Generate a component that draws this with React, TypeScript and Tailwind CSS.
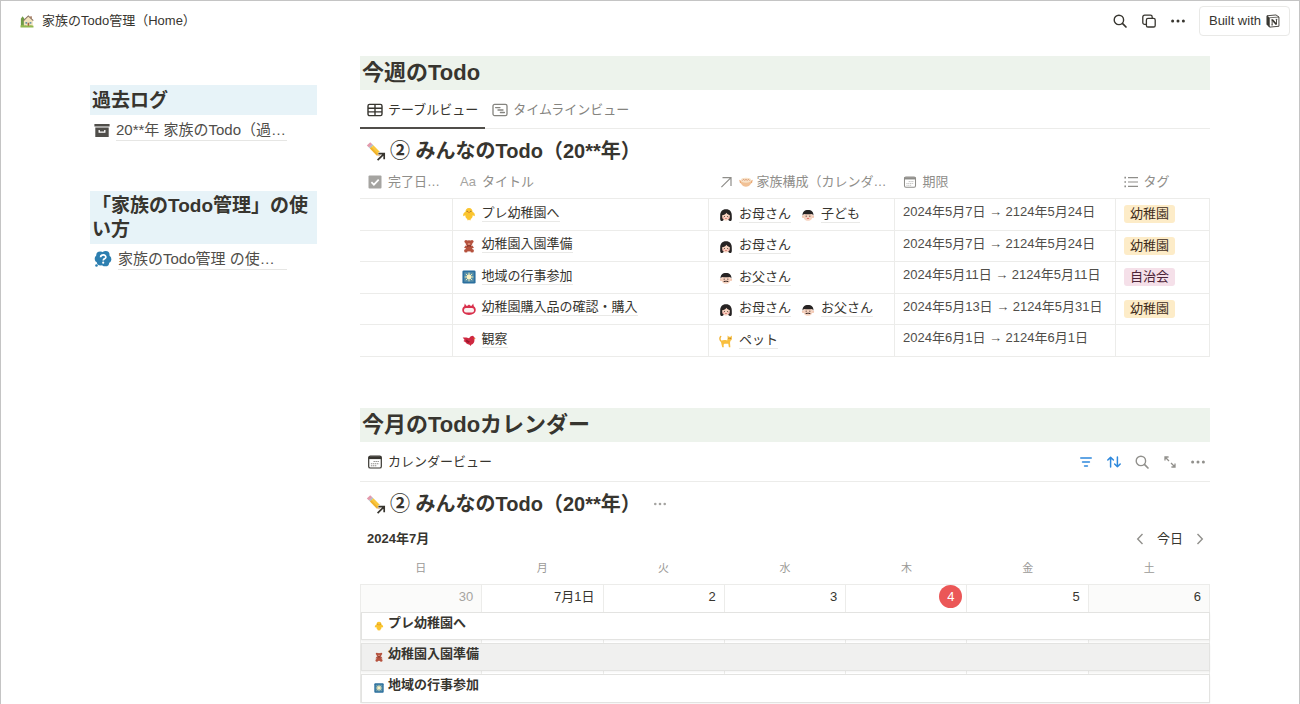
import type { ReactNode } from "react";

type IconProps = { className?: string };

/* ---------- line icons ---------- */

function SearchIcon({ className = "size-4" }: IconProps) {
  return (
    <svg viewBox="0 0 16 16" className={className} fill="none" stroke="currentColor" strokeWidth="1.4" strokeLinecap="round">
      <circle cx="6.9" cy="6.9" r="4.7" />
      <path d="M10.4 10.4 14 14" strokeWidth="1.7" />
    </svg>
  );
}

function CopyIcon({ className = "size-4" }: IconProps) {
  return (
    <svg viewBox="0 0 16 16" className={className} fill="none" stroke="currentColor" strokeWidth="1.3" strokeLinejoin="round">
      <rect x="5.4" y="5.4" width="8.8" height="8.6" rx="1.6" />
      <path d="M5.400 11.400H3.600A1.800 1.800 0 0 1 1.800 9.600V4A1.800 1.800 0 0 1 3.600 2.200h5.800A1.800 1.800 0 0 1 11.200 4v1.400" />
    </svg>
  );
}

function DotsIcon({ className = "size-4" }: IconProps) {
  return (
    <svg viewBox="0 0 16 16" className={className} fill="currentColor">
      <circle cx="2.6" cy="8" r="1.5" />
      <circle cx="8" cy="8" r="1.5" />
      <circle cx="13.4" cy="8" r="1.5" />
    </svg>
  );
}

function NotionIcon({ className = "size-[14px]" }: IconProps) {
  return (
    <svg viewBox="0 0 16 16" className={className} fill="none" stroke="#37352f">
      <path d="M1.2 2 11.4 1.1 14.8 3.4V14L4.2 15 1.2 11.8Z" fill="#fff" strokeWidth="1" strokeLinejoin="round" />
      <path d="M1.2 2 4 4.4V15L1.2 11.8Z" fill="#37352f" strokeWidth=".5" />
      <path d="M4 4.3 14.8 3.5" strokeWidth=".8" />
      <path d="M7 6.6v5.8M12 6v5.8" strokeWidth="1" />
      <path d="M7.2 6.6 11.900 12" strokeWidth="2" />
      <path d="M6 6.5h2M6 12.500h2M11 6.100h2" strokeWidth=".8" />
    </svg>
  );
}

function TableIcon({ className = "size-4" }: IconProps) {
  return (
    <svg viewBox="0 0 16 16" className={className} fill="none" stroke="currentColor" strokeWidth="1.4">
      <rect x="1" y="2.4" width="14" height="11.2" rx="1.6" />
      <path d="M1 6.2h14M1 9.9h14M8 2.4v11.2" />
    </svg>
  );
}

function TimelineIcon({ className = "size-4" }: IconProps) {
  return (
    <svg viewBox="0 0 16 16" className={className} fill="none" stroke="currentColor" strokeWidth="1.3" strokeLinecap="round">
      <rect x="1" y="2.4" width="14" height="11.2" rx="1.6" />
      <path d="M3.6 5.6H8M6 8h5M8.4 10.5h4" />
    </svg>
  );
}

function CalendarIcon({ className = "size-4" }: IconProps) {
  return (
    <svg viewBox="0 0 16 16" className={className} fill="none" stroke="currentColor">
      <rect x="1.7" y="2.2" width="12.6" height="11.8" rx="1.6" strokeWidth="1.2" />
      <path d="M1.7 3.8h12.6" strokeWidth="2.6" />
      <path d="M6.5 7.500h5.600M3.9 9.700h8.200M3.900 11.800h5.500" strokeWidth="1.1" strokeDasharray="1.4 .6" opacity=".55" />
    </svg>
  );
}

function CheckboxIcon({ className = "size-[14px]" }: IconProps) {
  return (
    <svg viewBox="0 0 14 14" className={className}>
      <rect x=".5" y=".5" width="13" height="13" rx="1" fill="currentColor" />
      <path d="m3.4 7.2 2.5 2.5 4.8-5" fill="none" stroke="#fff" strokeWidth="1.7" />
    </svg>
  );
}

function RelationIcon({ className = "size-[14px]" }: IconProps) {
  return (
    <svg viewBox="0 0 14 14" className={className} fill="none" stroke="currentColor" strokeWidth="1.2">
      <path d="M3.500 2.600h8.500v8.500M12 2.600 2.400 12.200" />
    </svg>
  );
}

function ListIcon({ className = "size-[14px]" }: IconProps) {
  return (
    <svg viewBox="0 0 14 14" className={className} fill="none" stroke="currentColor" strokeWidth="1.1">
      <path d="M4 2.6h10M4 7h10M4 11.4h10" />
      <path d="M.4 2.6h1.600M.4 7h1.600M.4 11.4h1.600" strokeWidth="1.6" />
    </svg>
  );
}

function FilterIcon({ className = "size-4" }: IconProps) {
  return (
    <svg viewBox="0 0 16 16" className={className} fill="none" stroke="currentColor" strokeWidth="1.6" strokeLinecap="round">
      <path d="M2.8 4h10.4M4.6 8h6.8M6.6 12h2.8" />
    </svg>
  );
}

function SortIcon({ className = "size-4" }: IconProps) {
  return (
    <svg viewBox="0 0 16 16" className={className} fill="none" stroke="currentColor" strokeWidth="1.5" strokeLinecap="round" strokeLinejoin="round">
      <path d="M4.6 13V3.2M1.8 6l2.8-2.8L7.4 6M11.4 3v9.8M8.6 10l2.8 2.8 2.8-2.8" />
    </svg>
  );
}

function ExpandIcon({ className = "size-4" }: IconProps) {
  return (
    <svg viewBox="0 0 16 16" className={className} fill="none" stroke="currentColor" strokeWidth="1.3">
      <path d="M3 6.6V3h3.6M3 3l4 4M13 9.4V13H9.4M13 13 9 9" />
    </svg>
  );
}

function ChevronIcon({ right }: { right?: boolean }) {
  return (
    <svg viewBox="0 0 14 14" className="size-[14px]" fill="none" stroke="currentColor" strokeWidth="1.4">
      <path d={right ? "m4.5 2 4.8 5-4.8 5" : "M9.5 2 4.7 7l4.8 5"} />
    </svg>
  );
}

function ArchiveIcon() {
  return (
    <svg viewBox="0 0 16 16" className="size-4 shrink-0" fill="#504e4a">
      <path d="M.4 2h15.2v2.6H.4zM1.3 5.600h13.400v9.400H1.300z" />
      <path d="M5.200 8v2.200h5.600V8" fill="none" stroke="#fff" strokeWidth="1.3" />
    </svg>
  );
}

function HelpIcon() {
  return (
    <svg viewBox="0 0 18 18" className="size-[18px] shrink-0">
      <g fill="#2d7fb0">
        <circle cx="6.200" cy="5.400" r="4" />
        <circle cx="11.700" cy="5" r="3.900" />
        <circle cx="13.600" cy="9.200" r="3.700" />
        <circle cx="11.300" cy="12.400" r="3.900" />
        <circle cx="6.600" cy="11.600" r="3.900" />
        <circle cx="4.200" cy="8.800" r="3.500" />
        <circle cx="2.500" cy="15.500" r="1.300" />
      </g>
      <path d="M6.600 7.200c.2-3.300 5.600-3 5.200.1-.2 1.600-2.600 1.500-2.600 3.300" fill="none" stroke="#fff" strokeWidth="1.7" />
      <circle cx="9.200" cy="12.700" r="1.100" fill="#fff" />
    </svg>
  );
}

/* ---------- emoji ---------- */

function HomeEmoji() {
  return (
    <svg viewBox="0 0 16 16" className="size-[14px]">
      <path d="M1 14.5V5.5L3 2.5l2 3v9Z" fill="#6f9b45" />
      <path d="M4.4 14V7L9.5 2.4 14.6 7v7Z" fill="#f3e3bd" />
      <path d="M3.8 7.8 9.5 2.2l5.7 5.4" fill="none" stroke="#8a7463" strokeWidth="1.3" />
      <path d="M11.8 2.5h1.6v3l-1.6-1.4Z" fill="#9c6a4d" />
      <path d="M6.2 9h2v2h-2zM11 9h2v2h-2z" fill="#6e97a8" />
      <path d="M8.7 10h1.8v4H8.7z" fill="#a4683f" />
      <path d="M.6 13c2-1.4 3.4-.6 4.4 0 2-.9 3.4.9 5 .3 2-.9 4-.6 5.4.2v1.8H.6Z" fill="#91b84e" />
    </svg>
  );
}

function PencilLinkEmoji() {
  return (
    <svg viewBox="0 0 20 20" className="size-5 shrink-0">
      <path d="M.8 4.400 4.200 1.200 6.400 3.200 3 6.600Z" fill="#e39aac" />
      <path d="M3 6.600 6.400 3.200 7.400 4.200 4 7.600Z" fill="#a9bac4" />
      <path d="M4 7.600 7.400 4.200 14.200 11.200 10.800 14.400Z" fill="#fac83d" />
      <path d="m4 7.600 1.400-1.300 7.100 7.100-1.700 1Z" fill="#f0b12d" />
      <path d="m10.800 14.400 3.400-3.200 1.600 5Z" fill="#e7c39a" />
      <path d="M12.400 12.600h5.800v5.600M18 12.800l-6.400 6.400" fill="none" stroke="#fff" strokeWidth="3" />
      <path d="M12.400 12.600h5.800v5.600M18 12.800l-6.400 6.400" fill="none" stroke="#37352f" strokeWidth="1.7" />
    </svg>
  );
}

function ChickEmoji({ className = "size-[14px]" }: IconProps) {
  return (
    <svg viewBox="0 0 16 16" className={className}>
      <path d="M8 1.200c2.800 0 4 2 4 4.300 2 .9 3.200 3 2.500 5l-2.300-1c0 2.300-1 4-2.400 4.300l.2 1.200H8.700L8 14.200 7.300 15H6l.2-1.200C4.800 13.500 3.800 11.800 3.800 9.500l-2.300 1c-.7-2 .5-4.100 2.500-5 0-2.300 1.200-4.300 4-4.300Z" fill="#fbc52e" />
      <path d="m6.700 5.900 1.300-.7 1.300.7L8 7.100Z" fill="#e8832e" />
      <circle cx="5.9" cy="4.9" r=".6" fill="#5d4326" />
      <circle cx="10.1" cy="4.9" r=".6" fill="#5d4326" />
    </svg>
  );
}

function BearEmoji({ className = "size-[14px]" }: IconProps) {
  return (
    <svg viewBox="0 0 16 16" className={className} fill="#b5523e">
      <circle cx="4.6" cy="2.8" r="1.8" />
      <circle cx="11.4" cy="2.8" r="1.8" />
      <ellipse cx="8" cy="4.6" rx="4" ry="3.2" />
      <ellipse cx="8" cy="10.2" rx="3.6" ry="4" />
      <path d="M4.5 7 2.400 9.800l1.500 1 2-2ZM11.500 7l2.100 2.800-1.500 1-2-2Z" />
      <circle cx="4.5" cy="13.4" r="2.1" />
      <circle cx="11.5" cy="13.4" r="2.1" />
      <ellipse cx="8" cy="5.700" rx="1.600" ry="1.200" fill="#d98b74" />
      <path d="M5.400 7.300h5.200L9.800 8.800 8 8l-1.800.8Z" fill="#6e2a22" />
    </svg>
  );
}

function EventEmoji({ className = "size-[14px]" }: IconProps) {
  return (
    <svg viewBox="0 0 16 16" className={className}>
      <rect x=".5" y=".5" width="15" height="15" rx="1.6" fill="#2b6f9e" />
      <rect x="2.6" y="2.6" width="10.8" height="10.8" fill="#5a91ab" />
      <path d="M8 3v10M3 8h10M4.5 4.5l7 7M11.5 4.5l-7 7" stroke="#f4ebae" strokeWidth="1.1" />
      <circle cx="8" cy="7.8" r="2.7" fill="#fbf2c1" />
    </svg>
  );
}

function BadgeEmoji() {
  return (
    <svg viewBox="0 0 16 16" className="size-[14px]">
      <path d="m3.200 1.600 1.700 2.600h1.300L8 2.800l1.800 1.400h1.300l1.700-2.600.7 3.300c1.400.9 2.200 2.300 2.200 4 0 3.600-3.300 5.900-7.700 5.900S.3 12.500.3 8.900c0-1.700.8-3.100 2.200-4Z" fill="#d9304c" />
      <rect x="2.300" y="6.800" width="11.400" height="5.200" rx="2.200" fill="#f9f2f1" />
    </svg>
  );
}

function BirdEmoji() {
  return (
    <svg viewBox="0 0 16 16" className="size-[14px]">
      <path d="M.8 5.200 5 5 8 6l2-2.200 2.600-.8 1.400 1.800 1.400 1.400-1.200.8c.3 3.200-1 5.600-3.600 6.300l-.8 1.500-1.200-1.400C6 13 4.600 12 4 10.600L1.600 9 3 8Z" fill="#cf2840" />
      <path d="m5 7.400 4.200 2.700-2 1.400L4.500 9.400Z" fill="#98172c" />
      <path d="m13.600 5.600 1.900.7-1.900.8Z" fill="#eea32b" />
    </svg>
  );
}

function MotherEmoji() {
  return (
    <svg viewBox="0 0 16 16" className="size-[14px] shrink-0">
      <path d="M8 1.500c4.600 0 6.600 3 6.600 7 0 3 .4 4.600-.6 6-1.300.8-2.600.3-3.200-.7H5.200c-.6 1-1.900 1.500-3.200.7-1-1.400-.6-3-.6-6 0-4 2-7 6.600-7Z" fill="#262323" />
      <path d="M3.600 8.300c2.200-.2 3.900-1.200 5-2.800.8 1.500 2 2.400 3.800 2.800.2 3.500-1.600 6-4.400 6s-4.600-2.500-4.400-6Z" fill="#f6d3c0" />
      <circle cx="6.2" cy="9.6" r=".6" fill="#4a302a" />
      <circle cx="9.9" cy="9.6" r=".6" fill="#4a302a" />
      <circle cx="5" cy="11.2" r="1" fill="#f3a9a4" />
      <circle cx="11" cy="11.2" r="1" fill="#f3a9a4" />
      <path d="M6.800 11.700h2.400c-.3 1.100-2.100 1.100-2.400 0Z" fill="#c53c40" />
    </svg>
  );
}

function FatherEmoji({ child }: { child?: boolean }) {
  return (
    <svg viewBox="0 0 16 16" className="size-[14px] shrink-0">
      <circle cx="2.4" cy="10" r="1.4" fill="#f2c6b0" />
      <circle cx="13.6" cy="10" r="1.4" fill="#f2c6b0" />
      <path d="M2.6 8.200C2.600 5 4.600 3.500 8 3.500s5.400 1.500 5.400 4.700c0 4-2.200 6.500-5.400 6.500s-5.400-2.500-5.400-6.500Z" fill="#f6d3c0" />
      <path d="M1.800 8.700C1.400 4.500 4 2.200 8 2.200s6.600 2.300 6.200 6.500l-1.500-1.800c-3.200.3-6.200.3-9.400 0Z" fill="#262323" />
      <circle cx="5.9" cy="9.3" r=".6" fill="#4a302a" />
      <circle cx="10.1" cy="9.3" r=".6" fill="#4a302a" />
      {child ? (
        <path d="M6.600 11.400h2.800c-.3 1.500-2.500 1.500-2.800 0Z" fill="#e0585a" />
      ) : (
        <path d="M4.900 12.400c.8-1.500 2.200-1.700 3.100-1 .9-.7 2.300-.5 3.100 1-1.200.5-2.400.2-3.100-.3-.7.5-1.900.8-3.100.3Z" fill="#33221f" />
      )}
    </svg>
  );
}

function CatEmoji() {
  return (
    <svg viewBox="0 0 16 16" className="size-[14px] shrink-0">
      <path d="M2.800 8.600C1 7 .8 4.400 2 2.800" fill="none" stroke="#f3b53a" strokeWidth="1.6" strokeLinecap="round" />
      <path d="M2 8c2.500-1.300 5-1.200 7.400-.6l.4-2.500V1.600L11.400 3h1.700l1.600-1.400v3.800c0 1.200-.7 1.900-1.600 2.200l-.5 2.400.4 5.200h-1.700l-.7-4.200H6.200l-1 1.400.3 2.800H3.700L3 12.200Z" fill="#f9bf3f" />
      <circle cx="11.4" cy="4.800" r=".5" fill="#5d4326" />
      <circle cx="13.4" cy="4.800" r=".5" fill="#5d4326" />
    </svg>
  );
}

function FamilyEmoji() {
  return (
    <svg viewBox="0 0 16 16" className="size-[14px] shrink-0 opacity-80">
      <path d="M.4 5.500 3.400 7l.8 3.600L1 8.800ZM15.600 5.500 12.600 7l-.8 3.600L15 8.800Z" fill="#e58e4c" />
      <path d="M2 6.600h12c.2 4-2.200 6.800-6 6.800s-6.200-2.800-6-6.800Z" fill="#eeb27c" />
      <ellipse cx="8" cy="6" rx="6" ry="2.800" fill="#f7dcbb" />
      <path d="M3.800 6.400c1-1.600 2-1.600 2.800-.2.800-1.500 2-1.500 2.800 0 .8-1.400 1.900-1.400 2.800.2" fill="none" stroke="#c9703d" strokeWidth=".9" />
    </svg>
  );
}

/* ---------- data ---------- */

type Person = "mother" | "father" | "child" | "pet";

const people: Record<Person, { name: string; icon: ReactNode }> = {
  mother: { name: "お母さん", icon: <MotherEmoji /> },
  father: { name: "お父さん", icon: <FatherEmoji /> },
  child: { name: "子ども", icon: <FatherEmoji child /> },
  pet: { name: "ペット", icon: <CatEmoji /> },
};

const todos: { title: string; icon: ReactNode; members: Person[]; date: string; tag?: string }[] = [
  { title: "プレ幼稚園へ", icon: <ChickEmoji />, members: ["mother", "child"], date: "2024年5月7日 → 2124年5月24日", tag: "幼稚園" },
  { title: "幼稚園入園準備", icon: <BearEmoji />, members: ["mother"], date: "2024年5月7日 → 2124年5月24日", tag: "幼稚園" },
  { title: "地域の行事参加", icon: <EventEmoji />, members: ["father"], date: "2024年5月11日 → 2124年5月11日", tag: "自治会" },
  { title: "幼稚園購入品の確認・購入", icon: <BadgeEmoji />, members: ["mother", "father"], date: "2024年5月13日 → 2124年5月31日", tag: "幼稚園" },
  { title: "観察", icon: <BirdEmoji />, members: ["pet"], date: "2024年6月1日 → 2124年6月1日" },
];

const weekdays = ["日", "月", "火", "水", "木", "金", "土"];

const days = [
  { label: "30", style: "col-start-1 bg-[#fbfbfa] text-[#a5a4a1]" },
  { label: "7月1日", style: "col-start-2" },
  { label: "2", style: "col-start-3" },
  { label: "3", style: "col-start-4" },
  { label: "4", style: "col-start-5", today: true },
  { label: "5", style: "col-start-6" },
  { label: "6", style: "col-start-7 bg-[#fbfbfa]" },
];

const events = [
  { title: "プレ幼稚園へ", icon: <ChickEmoji className="size-[10px]" />, style: "row-start-2 bg-white" },
  { title: "幼稚園入園準備", icon: <BearEmoji className="size-[10px]" />, style: "row-start-3 bg-[#f0f0ef]" },
  { title: "地域の行事参加", icon: <EventEmoji className="size-[10px]" />, style: "row-start-4 bg-white" },
];

/* ---------- parts ---------- */

function SectionHeading({ children }: { children: ReactNode }) {
  return (
    <h2 className="bg-[#edf3ec] pl-[2px] text-[22px] leading-[34px] font-bold">
      {children}
    </h2>
  );
}

function DatabaseTitle({ children }: { children?: ReactNode }) {
  return (
    <div className="flex items-center pl-1.5 pt-2 pb-px">
      <PencilLinkEmoji />
      <h3 className="ml-1 text-xl leading-7 font-bold">② みんなのTodo（20**年）</h3>
      {children}
    </div>
  );
}

function Sidebar() {
  return (
    <aside className="w-[227px] shrink-0 pt-[29px]">
      <h2 className="bg-[#e7f3f8] px-[2px] pt-1 pb-0.5 text-[19px] leading-6 font-bold">過去ログ</h2>
      <a href="#log" className="flex items-center gap-1.5 h-[30px] pl-1 text-[15px] text-[#504e4a]">
        <ArchiveIcon />
        <span className="w-[171px] border-b border-[#e6e6e4] leading-5 whitespace-nowrap">20**年 家族のTodo（過…</span>
      </a>

      <h2 className="mt-[46px] bg-[#e7f3f8] px-[2px] pt-[3px] pb-0.5 text-[19px] leading-6 font-bold">
        「家族のTodo管理」の使い方
      </h2>
      <a href="#guide" className="flex items-center gap-1.5 h-[30px] pl-1 text-[15px] text-[#504e4a]">
        <HelpIcon />
        <span className="w-[169px] border-b border-[#e6e6e4] leading-5 whitespace-nowrap">家族のTodo管理 の使…</span>
      </a>
    </aside>
  );
}

function TodoTable() {
  return (
    <table className="w-full table-fixed border-collapse text-[13px] leading-4">
      <colgroup>
        <col className="w-[92px]" />
        <col />
        <col className="w-[186px]" />
        <col className="w-[221px]" />
        <col className="w-[94px]" />
      </colgroup>
      <thead>
        <tr className="h-8 border-b border-[#ececea] text-left whitespace-nowrap text-[#8f8e8a]">
          <th className="pl-2 font-normal">
            <div className="flex items-center gap-1.5">
              <CheckboxIcon className="size-[14px] shrink-0 text-[#a5a4a1]" />
              完了日…
            </div>
          </th>
          <th className="pl-2 font-normal">
            <div className="flex items-center gap-1.5">
              <span className="text-[#a5a4a1]">Aa</span>
              タイトル
            </div>
          </th>
          <th className="pl-2.5 font-normal">
            <div className="flex items-center">
              <RelationIcon />
              <span className="ml-1.5 mr-1"><FamilyEmoji /></span>
              家族構成（カレンダ…
            </div>
          </th>
          <th className="pl-2 font-normal">
            <div className="flex items-center gap-1.5">
              <CalendarIcon className="size-[14px]" />
              期限
            </div>
          </th>
          <th className="pl-2 font-normal">
            <div className="flex items-center gap-1.5">
              <ListIcon />
              タグ
            </div>
          </th>
        </tr>
      </thead>
      <tbody>
        {todos.map((todo) => (
          <tr key={todo.title} className="odd:h-8 even:h-[31px] border-b border-[#ececea]">
            <td className="border-r border-[#ececea]"></td>
            <td className="border-r border-[#ececea] pl-[9px]">
              <a href="#todo" className="flex items-center gap-1.5">
                {todo.icon}
                <span className="mb-0.5 border-b border-[#e9e9e7]">{todo.title}</span>
              </a>
            </td>
            <td className="border-r border-[#ececea] pl-2.5">
              <div className="flex items-center gap-2.5">
                {todo.members.map((key) => (
                  <a key={key} href="#member" className="flex items-center gap-1.5">
                    <span className="mt-0.5">{people[key].icon}</span>
                    <span className="border-b border-[#e9e9e7]">{people[key].name}</span>
                  </a>
                ))}
              </div>
            </td>
            <td className="border-r border-[#ececea] pb-1 pl-2 text-[#504e4a] whitespace-nowrap">{todo.date}</td>
            <td className="border-r border-[#ececea] pl-2">
              {todo.tag && (
                <span
                  className={`inline-block rounded-[3px] px-1.5 leading-[18px] ${
                    todo.tag === "自治会" ? "bg-[#f5e0e9] text-[#4c2337]" : "bg-[#fdecc8] text-[#402c1b]"
                  }`}
                >
                  {todo.tag}
                </span>
              )}
            </td>
          </tr>
        ))}
      </tbody>
    </table>
  );
}

function Calendar() {
  return (
    <div className="mt-1.5">
      <div className="flex items-center justify-between h-7 pl-[7px] pr-[3px] text-[13px]">
        <h4 className="font-bold">2024年7月</h4>
        <div className="flex items-center gap-2.5 text-[#91908c]">
          <button aria-label="前の月"><ChevronIcon /></button>
          <button className="text-[#37352f]">今日</button>
          <button aria-label="次の月"><ChevronIcon right /></button>
        </div>
      </div>

      <div className="grid grid-cols-7 text-center text-[11px] leading-[31px] text-[#9b9a97]">
        {weekdays.map((day) => (
          <div key={day}>{day}</div>
        ))}
      </div>

      {/* day columns run behind the event bars */}
      <div className="grid grid-cols-7 grid-rows-[27px_31px_31px_29px] border-t border-l border-[#ececea]">
        {days.map((day) => (
          <div
            key={day.label}
            className={`row-start-1 row-span-4 flex items-start justify-end border-r border-[#ececea] pr-2 text-[13px] leading-[23px] ${day.style}`}
          >
            {day.today ? (
              <span className="-mr-1 size-[23px] rounded-full bg-[#eb5757] text-center text-white">{day.label}</span>
            ) : (
              day.label
            )}
          </div>
        ))}
        {events.map((event) => (
          <a
            key={event.title}
            href="#event"
            className={`col-start-1 col-span-7 mb-[3px] last:mb-0 flex items-center gap-1 border border-[#e3e3e1] pl-3 text-[13px] leading-4 font-bold shadow-xs ${event.style}`}
          >
            {event.icon}
            <span className="mb-1.5">{event.title}</span>
          </a>
        ))}
      </div>
    </div>
  );
}

export default function App() {
  return (
    <div className="min-h-screen border-x border-t border-[#c4c4c4] bg-white font-['Liberation_Sans','Noto_Sans_CJK_JP',sans-serif] text-[#37352f]">
      <header className="flex items-center justify-between h-10 pl-[19px] pr-[9px] text-[13px]">
        <a href="#home" className="flex items-center gap-2">
          <HomeEmoji />
          家族のTodo管理（Home）
        </a>
        <div className="flex items-center gap-[13px]">
          <button aria-label="検索"><SearchIcon /></button>
          <button aria-label="複製"><CopyIcon /></button>
          <button aria-label="その他"><DotsIcon /></button>
          <a href="#notion" className="flex items-center gap-[5px] h-[30px] rounded-sm border border-[#e9e9e7] px-[9px]">
            Built with
            <NotionIcon />
          </a>
        </div>
      </header>

      <div className="flex gap-[43px] px-[89px] pt-[15px]">
        <Sidebar />

        <main className="min-w-0 flex-1">
          <section>
            <SectionHeading>今週のTodo</SectionHeading>
            <div className="flex h-[39px] border-b border-[#ececea] text-[13px]">
              <button className="flex items-center gap-[5px] -mb-px border-b-2 border-[#504e4a] px-[7px] pt-[3px]">
                <TableIcon />
                テーブルビュー
              </button>
              <button className="flex items-center gap-[5px] px-[7px] pt-0.5 text-[#85847f]">
                <TimelineIcon />
                タイムラインビュー
              </button>
            </div>
            <DatabaseTitle />
            <TodoTable />
          </section>

          <section className="mt-[51px]">
            <SectionHeading>今月のTodoカレンダー</SectionHeading>
            <div className="flex items-center justify-between h-10 border-b border-[#ececea] pt-0.5 pr-1 text-[13px]">
              <button className="flex items-center gap-[5px] px-[7px]">
                <CalendarIcon />
                カレンダービュー
              </button>
              <div className="flex items-center gap-3 text-[#91908c]">
                <button aria-label="フィルター" className="text-[#2e88dc]"><FilterIcon /></button>
                <button aria-label="並べ替え" className="text-[#2e88dc]"><SortIcon /></button>
                <button aria-label="検索"><SearchIcon /></button>
                <button aria-label="拡大"><ExpandIcon /></button>
                <button aria-label="その他"><DotsIcon /></button>
              </div>
            </div>
            <DatabaseTitle>
              <button aria-label="その他" className="ml-3 text-[#a5a4a1]"><DotsIcon className="size-[14px]" /></button>
            </DatabaseTitle>
            <Calendar />
          </section>
        </main>
      </div>
    </div>
  );
}
